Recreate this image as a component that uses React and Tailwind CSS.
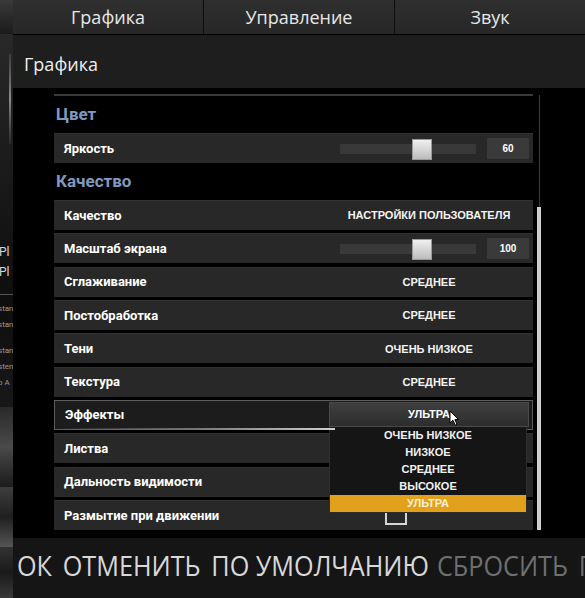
import React from "react";

const LABEL = { fontFamily: "Roboto, 'Liberation Sans', sans-serif" };
const VALUE = { fontFamily: "'Liberation Sans', Arial, sans-serif" };
const UI = { fontFamily: "'Open Sans', 'Noto Sans', sans-serif" };

const qualityRows = [
  { label: "Качество", value: "НАСТРОЙКИ ПОЛЬЗОВАТЕЛЯ" },
  { label: "Масштаб экрана", slider: "100" },
  { label: "Сглаживание", value: "СРЕДНЕЕ" },
  { label: "Постобработка", value: "СРЕДНЕЕ" },
  { label: "Тени", value: "ОЧЕНЬ НИЗКОЕ" },
  { label: "Текстура", value: "СРЕДНЕЕ" },
  { label: "Эффекты", dropdown: "УЛЬТРА" },
  { label: "Листва" },
  { label: "Дальность видимости" },
  { label: "Размытие при движении", checkbox: true },
];

const options = ["ОЧЕНЬ НИЗКОЕ", "НИЗКОЕ", "СРЕДНЕЕ", "ВЫСОКОЕ", "УЛЬТРА"];

// little strip of the game scene peeking out on the left
function SceneStrip() {
  return (
    <div className="flex h-[598px] w-[13px] shrink-0 flex-col overflow-hidden bg-gradient-to-b from-[#2c2c2c] via-[#0e0e0e] to-[#2a2a2a]">
      <div className="h-[34px] bg-gradient-to-b from-[#3a3a3a] to-[#1b1b1b]" />
      <div className="ml-[9px] mt-[20px] h-[90px] w-[2px] bg-gradient-to-b from-[#3c3c3c] via-[#8a8a8a] to-[#2a2a2a]" />
      <div className="mt-[98px] -ml-[1px] text-[12px] leading-[20px] text-[#d8d8d8]" style={LABEL}>
        <div>Pl</div>
        <div>Pl</div>
      </div>
      <div className="mt-[12px] h-[1px] w-full bg-[#555]" />
      <div className="-ml-[2px] mt-[6px] text-[8px] leading-[16px] text-[#9a9a9a]" style={LABEL}>
        <div>stan</div>
        <div>stan</div>
        <div className="mt-[10px]">stan</div>
        <div>sten</div>
        <div>o A</div>
      </div>
      <div className="mt-[16px] h-[80px] bg-gradient-to-b from-[#2a2a2a] via-[#4a4a4a] to-[#1c1c1c]" />
      <div className="h-[60px] bg-gradient-to-b from-[#3e3e3e] via-[#202020] to-[#555]" />
      <div className="flex-1 bg-gradient-to-b from-[#333] via-[#1a1a1a] to-[#3a3a3a]" />
    </div>
  );
}

function Slider({ value }) {
  return (
    <div className="mr-[4px] flex items-center">
      <div className="relative h-[10px] w-[136px] bg-[#393939]">
        <div className="absolute left-[72px] top-[-5px] h-[21px] w-[20px] border border-[#9a9a9a] bg-gradient-to-b from-[#f0f0f0] to-[#bcbcbc]" />
      </div>
      <div
        className="ml-[11px] flex h-[21px] w-[42px] items-center justify-center bg-[#3a3a3a] text-[10px] font-bold text-white"
        style={VALUE}
      >
        {value}
      </div>
    </div>
  );
}

function Cursor() {
  return (
    <svg className="absolute left-[120px] top-[8px]" width="11" height="17" viewBox="0 0 11 17">
      <path
        d="M1 1 L1 13 L4 10.2 L6.2 15.2 L8 14.4 L5.9 9.6 L9.6 9.6 Z"
        fill="#fff"
        stroke="#000"
        strokeWidth="1"
        strokeLinejoin="round"
      />
    </svg>
  );
}

function Dropdown({ value }) {
  return (
    <div className="relative mr-[3px] mt-[-1px] h-[25px] w-[200px] self-center">
      <div
        className="flex h-full w-full items-center justify-center border border-[#4a4a4a] bg-gradient-to-b from-[#3f3f3f] to-[#2d2d2d] text-[11px] font-bold text-white"
        style={VALUE}
      >
        {value}
      </div>
      <Cursor />
      <div className="absolute left-0 top-[25px] w-[198px] border-x border-b border-[#2e2e2e] bg-[#151515]">
        {options.map((o) => (
          <div
            key={o}
            className={`flex h-[17px] items-center justify-center text-[11px] font-bold ${
              o === value ? "bg-[#e1a11d] text-[#fbf0d8]" : "text-[#f2f2f2]"
            }`}
            style={VALUE}
          >
            {o}
          </div>
        ))}
      </div>
    </div>
  );
}

function Row({ row }) {
  const active = !!row.dropdown;
  return (
    <div
      className={`relative flex h-[30px] shrink-0 items-center justify-between ${
        active ? "z-10 border border-[#5c5c5c] bg-[#1c1c1c]" : "border-t border-[#313131] bg-[#282828]"
      }`}
    >
      <span className="pl-[10px] text-[13px] font-bold text-white" style={LABEL}>
        {row.label}
      </span>
      {row.value && (
        <span className="mr-[5px] w-[198px] text-center text-[11px] font-bold text-[#f4f4f4]" style={VALUE}>
          {row.value}
        </span>
      )}
      {row.slider && <Slider value={row.slider} />}
      {row.dropdown && <Dropdown value={row.dropdown} />}
      {row.checkbox && (
        <div className="mr-[5px] flex w-[198px]">
          <div className="ml-[55px] h-[20px] w-[22px] border-2 border-[#d6d6d6]" />
        </div>
      )}
      {active && (
        <div className="absolute bottom-[-1px] left-0 h-[2px] w-[280px] bg-gradient-to-r from-transparent via-[#777] to-[#d0d0d0]" />
      )}
    </div>
  );
}

function Heading({ children }) {
  return (
    <div className="flex h-[37px] items-center pl-[2px] text-[17px] font-bold text-[#8299bf]" style={LABEL}>
      {children}
    </div>
  );
}

export default function App() {
  return (
    <div className="flex h-[598px] w-[585px] overflow-hidden bg-black">
      <SceneStrip />

      <div className="flex w-[572px] flex-col">
        {/* tabs */}
        <div className="flex h-[34px] gap-[1px] bg-[#0c0c0c]" style={UI}>
          {["Графика", "Управление", "Звук"].map((t) => (
            <div
              key={t}
              className="flex flex-1 items-center justify-center bg-gradient-to-b from-[#2f2f2f] to-[#272727] text-[18px] text-[#e8e8e8]"
            >
              {t}
            </div>
          ))}
        </div>

        {/* section header */}
        <div className="mt-[1px] h-[53px] bg-[#1e1e1e] pl-[11px] pt-[17px] text-[18px] leading-[24px] text-[#f0f0f0]" style={UI}>
          Графика
        </div>

        {/* settings list */}
        <div className="flex h-[450px] bg-black">
          <div className="ml-[41px] flex w-[479px] flex-col pt-[6px]">
            <div className="h-[2px] bg-[#3a3a3a]" />
            <Heading>Цвет</Heading>
            <div className="flex h-[30px] items-center justify-between border-t border-[#313131] bg-[#282828]">
              <span className="pl-[10px] text-[13px] font-bold text-white" style={LABEL}>
                Яркость
              </span>
              <Slider value="60" />
            </div>
            <Heading>Качество</Heading>
            <div className="flex flex-col gap-[3.33px]">
              {qualityRows.map((r) => (
                <Row key={r.label} row={r} />
              ))}
            </div>
          </div>

          {/* scrollbar */}
          <div className="ml-[4px] mt-[7px] flex h-[435px] w-[4px] flex-col items-center">
            <div className="h-[112px] w-[1px] bg-[#3a3a3a]" />
            <div className="w-[4px] flex-1 bg-[#cfcfcf]" />
          </div>
        </div>

        {/* footer actions, narrowed like the game's condensed face */}
        <div className="flex h-[60px] items-center overflow-hidden bg-[#151515] pb-[6px] pl-[4px]">
          <div
            className="flex origin-left scale-x-90 items-center gap-[12px] whitespace-nowrap text-[28px] leading-none text-[#d8d8d8]"
            style={UI}
          >
            <span>ОК</span>
            <span>ОТМЕНИТЬ</span>
            <span>ПО УМОЛЧАНИЮ</span>
            <span className="-ml-[3px] text-[#6f6f6f]">СБРОСИТЬ</span>
            <span className="text-[#6f6f6f]">ПРИМЕНИТЬ</span>
          </div>
        </div>
      </div>
    </div>
  );
}
